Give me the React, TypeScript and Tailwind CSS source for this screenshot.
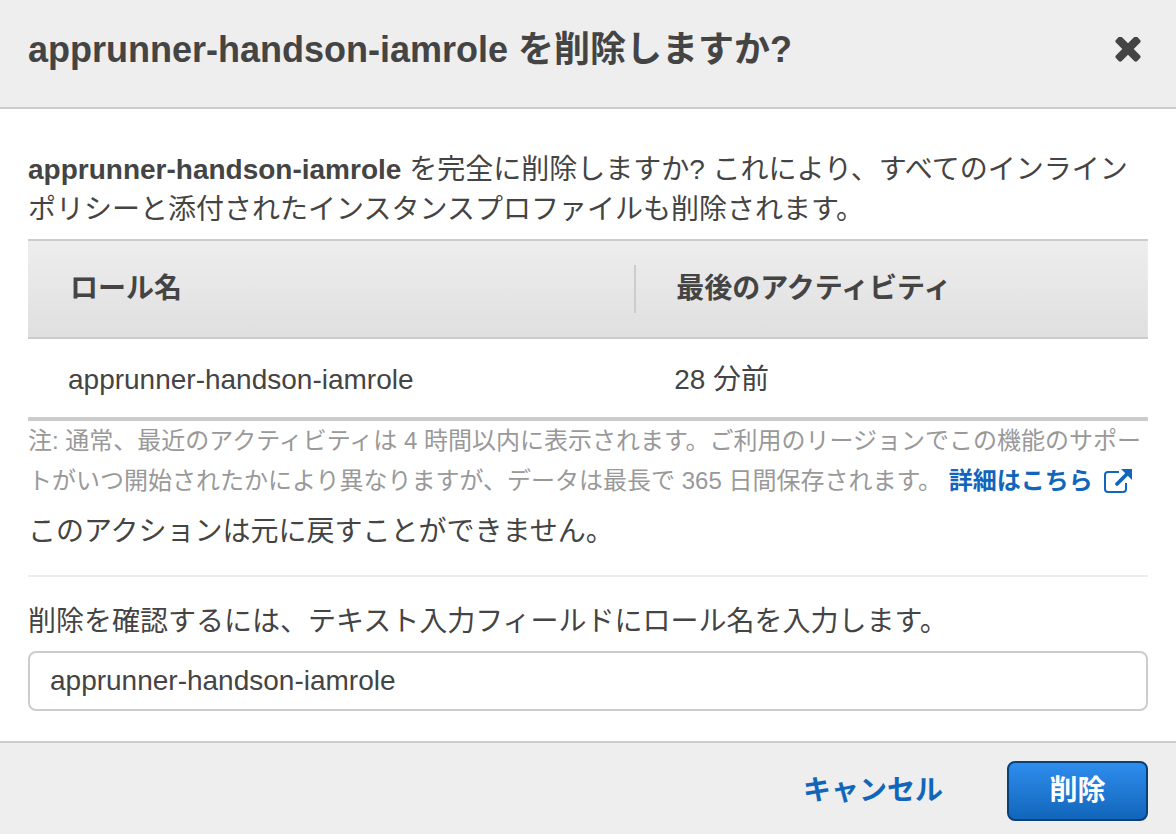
import { useState } from "react";

const roles = [{ name: "apprunner-handson-iamrole", activity: "28 分前" }];

function CloseIcon() {
  return (
    <svg width="26" height="26" viewBox="0 0 26 26" fill="#444" aria-hidden="true">
      <rect x="-2" y="8" width="30" height="8" rx="2.2" transform="rotate(45 13 12)" />
      <rect x="-2" y="8" width="30" height="8" rx="2.2" transform="rotate(-45 13 12)" />
    </svg>
  );
}

function ExternalIcon() {
  return (
    <svg className="ml-[9px] inline-block align-[-6px]" width="30" height="28" viewBox="0 0 30 28" fill="none" stroke="#1166bb" aria-hidden="true">
      <path d="M17 5H6a3 3 0 0 0-3 3v14a3 3 0 0 0 3 3h15a3 3 0 0 0 3-3v-6" strokeWidth="2" />
      <path d="M15 17L26 6" strokeWidth="3.8" strokeLinecap="round" />
      <path d="M19 2h11v11z" fill="#1166bb" stroke="none" />
    </svg>
  );
}

export default function App() {
  const [value, setValue] = useState("apprunner-handson-iamrole");
  return (
    <div
      role="dialog"
      aria-labelledby="title"
      className="flex min-h-screen flex-col bg-white font-['Liberation_Sans','Noto_Sans_CJK_JP',sans-serif] text-[28px] leading-10 text-[#444]"
    >
      <header className="flex items-center justify-between border-b-2 border-[#ccc] bg-[#eee] px-7 pt-[25px] pb-8">
        <h1 id="title" className="text-4xl leading-[50px] font-bold">apprunner-handson-iamrole を削除しますか?</h1>
        <button type="button" aria-label="閉じる" className="mr-[7px]">
          <CloseIcon />
        </button>
      </header>
      <main className="flex-1 px-7 pt-[41px]">
        <p>
          <strong>apprunner-handson-iamrole</strong> を完全に削除しますか? これにより、すべてのインラインポリシーと添付されたインスタンスプロファイルも削除されます。
        </p>
        <table className="mt-[9px] w-full table-fixed border-separate border-spacing-0 text-left">
          <thead className="bg-linear-to-b from-[#eee] to-[#dfdfdf]">
            <tr>
              <th className="w-[54.3%] border-y-2 border-[#ccc] py-6 font-bold">
                <div className="border-r-2 border-[#ccc] pl-[42px] leading-[48px]">ロール名</div>
              </th>
              <th className="border-y-2 border-[#ccc] py-6 pl-10 font-bold">最後のアクティビティ</th>
            </tr>
          </thead>
          <tbody>
            {roles.map((role) => (
              <tr key={role.name}>
                <td className="border-b-4 border-[#ccc] pt-[21px] pb-[17px] pl-10">{role.name}</td>
                <td className="border-b-4 border-[#ccc] pt-[21px] pb-[17px] pl-[38px]">{role.activity}</td>
              </tr>
            ))}
          </tbody>
        </table>
        <p className="text-2xl leading-10 text-[#999]">
          注: 通常、最近のアクティビティは 4 時間以内に表示されます。ご利用のリージョンでこの機能のサポートがいつ開始されたかにより異なりますが、データは最長で 365 日間保存されます。{" "}
          <a href="#details" className="font-bold whitespace-nowrap text-[#1166bb]">
            詳細はこちら
            <ExternalIcon />
          </a>
        </p>
        <p className="mt-[11px]">このアクションは元に戻すことができません。</p>
        <hr className="mt-[23px] border-t-2 border-[#eaeded]" />
        <label htmlFor="confirm" className="mt-[25px] block">削除を確認するには、テキスト入力フィールドにロール名を入力します。</label>
        <input
          id="confirm"
          type="text"
          value={value}
          onChange={(event) => setValue(event.target.value)}
          className="mt-[9px] block h-15 w-full rounded-lg border-2 border-[#ccc] bg-white px-5"
        />
      </main>
      <footer className="flex items-center justify-end gap-16 border-t-2 border-[#ccc] bg-[#eee] px-7 pt-[18px] pb-[13px]">
        <button type="button" className="font-bold text-[#1166bb]">キャンセル</button>
        <button type="button" className="h-15 min-w-[141px] rounded-lg border-2 border-[#0a4078] bg-linear-to-b from-[#2e8ded] to-[#1166bb] px-9 font-bold text-white">削除</button>
      </footer>
    </div>
  );
}
